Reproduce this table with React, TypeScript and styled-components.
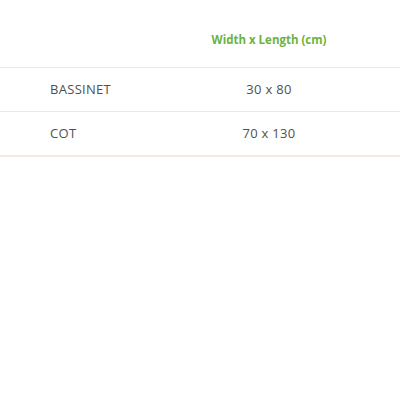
import React from 'react'
import styled, { createGlobalStyle } from 'styled-components'

const GlobalStyle = createGlobalStyle`
    body {
        margin: 0;
        background: #ffffff;
        font-family: "Open Sans", "Liberation Sans", sans-serif;
    }
`

const SizeTable = styled.table`
    width: 400px;
    border-collapse: collapse;
    table-layout: fixed;
`

const HeadCell = styled.th<{ $width?: number }>`
    width: ${p => (p.$width ? `${p.$width}px` : 'auto')};
    height: 56px;
    padding: 11px 0 0 0;
    color: #6cb33f;
    font-size: 11.5px;
    font-weight: 700;
    text-align: center;
    border-bottom: 1px solid #f2e6dd;
`

const Row = styled.tr<{ $last?: boolean }>`
    border-bottom: ${p => (p.$last ? '2px solid #f6ebe2' : '1px solid #f2e6dd')};
`

const NameCell = styled.td`
    height: 41px;
    padding: 0 0 2px 50px;
    color: #505050;
    font-size: 13px;
    letter-spacing: 0.3px;
`

const ValueCell = styled.td`
    height: 41px;
    padding: 0 0 2px 0;
    color: #505050;
    font-size: 13px;
    text-align: center;
    letter-spacing: 0.3px;
`

const sizes = [
    { name: 'BASSINET', value: '30 x 80' },
    { name: 'COT', value: '70 x 130' },
]

const App = () => {
    return (
        <React.Fragment>
            <GlobalStyle />
            <SizeTable>
                <thead>
                    <tr>
                        <HeadCell $width={138}></HeadCell>
                        <HeadCell>Width x Length (cm)</HeadCell>
                    </tr>
                </thead>
                <tbody>
                    {sizes.map((s, i) => (
                        <Row key={s.name} $last={i === sizes.length - 1}>
                            <NameCell>{s.name}</NameCell>
                            <ValueCell>{s.value}</ValueCell>
                        </Row>
                    ))}
                </tbody>
            </SizeTable>
        </React.Fragment>
    )
}

export default App
